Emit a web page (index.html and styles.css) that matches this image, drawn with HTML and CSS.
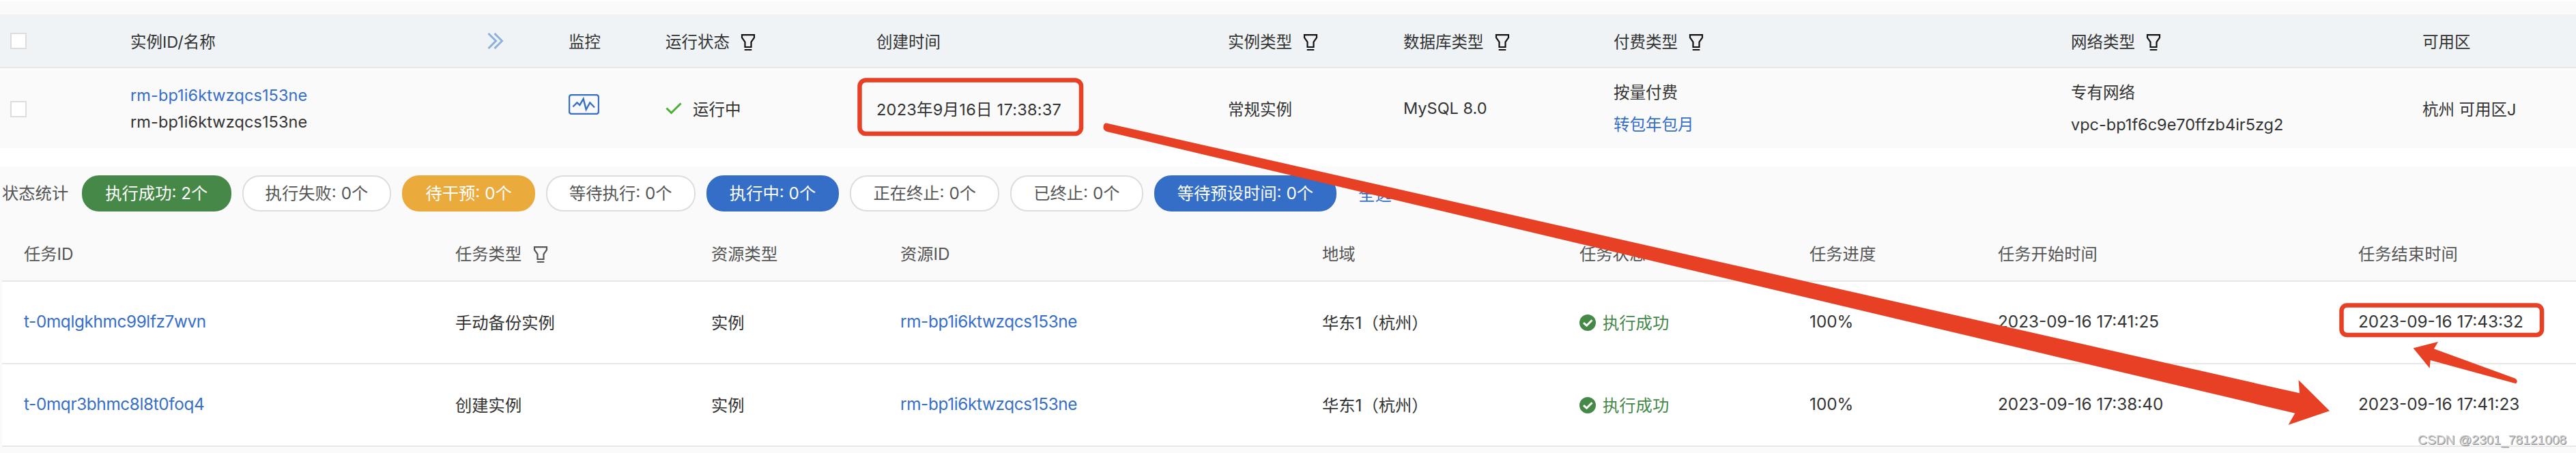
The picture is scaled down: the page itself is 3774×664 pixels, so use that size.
FILE: index.html
```html
<!DOCTYPE html>
<html lang="zh-CN">
<head>
    <meta charset="UTF-8">
    <title>实例列表</title>
    <link rel="stylesheet" href="styles.css">
</head>
<body>
    <!-- 公用图标 -->
    <svg class="symbols" width="0" height="0">
        <symbol id="filter" viewBox="0 0 22 26">
            <path d="M2 2.200h18v4l-4.500 6.300v7.500h-9v-7.500L2 6.200z" fill="none" stroke="currentColor" stroke-width="2.200"/>
            <path d="M5.700 24h10.600" stroke="currentColor" stroke-width="2"/>
        </symbol>
        <symbol id="success" viewBox="0 0 24 24">
            <circle cx="12" cy="12" r="12" fill="#468847"/>
            <path d="M6 12.200l4.500 4 8-8" fill="none" stroke="#fff" stroke-width="3"/>
        </symbol>
    </svg>

    <!-- 实例列表 -->
    <section class="instances">
        <div class="instance-grid instance-head">
            <div><span class="checkbox"></span></div>
            <div>实例ID/名称</div>
            <div><svg class="expand" viewBox="0 0 24 24"><path d="M1.500 1l11 11-11 11M10.500 1l11 11-11 11"/></svg></div>
            <div>监控</div>
            <div>运行状态<svg class="filter"><use href="#filter"/></svg></div>
            <div>创建时间</div>
            <div>实例类型<svg class="filter"><use href="#filter"/></svg></div>
            <div>数据库类型<svg class="filter"><use href="#filter"/></svg></div>
            <div>付费类型<svg class="filter"><use href="#filter"/></svg></div>
            <div>网络类型<svg class="filter"><use href="#filter"/></svg></div>
            <div>可用区</div>
        </div>
        <div class="instance-grid instance-row">
            <div><span class="checkbox"></span></div>
            <div class="names"><a class="link">rm-bp1i6ktwzqcs153ne</a><span>rm-bp1i6ktwzqcs153ne</span></div>
            <div></div>
            <div><svg class="monitor" viewBox="0 0 45 30"><rect x="1" y="1" width="43" height="28" rx="3.500"/><path d="M6.400 18.500l6-6 4 3.400 5.300-9 4 15.600 5.600-10 6.700 7"/></svg></div>
            <div><svg class="tick" viewBox="0 0 24 18"><path d="M1.500 8.500l7 7L22.500 1.500"/></svg>运行中</div>
            <div class="created">2023年9月16日 17:38:37</div>
            <div>常规实例</div>
            <div>MySQL 8.0</div>
            <div class="two-line"><span>按量付费</span><a class="link">转包年包月</a></div>
            <div class="two-line"><span>专有网络</span><span>vpc-bp1f6c9e70ffzb4ir5zg2</span></div>
            <div>杭州 可用区J</div>
        </div>
    </section>

    <!-- 任务列表 -->
    <section class="tasks">
        <div class="stats">
            <span class="stats-label">状态统计</span>
            <span class="pill green">执行成功: 2个</span>
            <span class="pill">执行失败: 0个</span>
            <span class="pill orange">待干预: 0个</span>
            <span class="pill">等待执行: 0个</span>
            <span class="pill blue">执行中: 0个</span>
            <span class="pill">正在终止: 0个</span>
            <span class="pill">已终止: 0个</span>
            <span class="pill blue">等待预设时间: 0个</span>
            <a class="link select-all">全选</a>
        </div>
        <div class="task-grid task-head">
            <div>任务ID</div>
            <div>任务类型<svg class="filter"><use href="#filter"/></svg></div>
            <div>资源类型</div>
            <div>资源ID</div>
            <div>地域</div>
            <div>任务状态</div>
            <div>任务进度</div>
            <div>任务开始时间</div>
            <div>任务结束时间</div>
        </div>
        <div class="task-grid task-row">
            <div><a class="link">t-0mqlgkhmc99lfz7wvn</a></div>
            <div>手动备份实例</div>
            <div>实例</div>
            <div><a class="link">rm-bp1i6ktwzqcs153ne</a></div>
            <div>华东1（杭州）</div>
            <div class="ok"><svg class="success"><use href="#success"/></svg>执行成功</div>
            <div>100%</div>
            <div>2023-09-16 17:41:25</div>
            <div>2023-09-16 17:43:32</div>
        </div>
        <div class="task-grid task-row">
            <div><a class="link">t-0mqr3bhmc8l8t0foq4</a></div>
            <div>创建实例</div>
            <div>实例</div>
            <div><a class="link">rm-bp1i6ktwzqcs153ne</a></div>
            <div>华东1（杭州）</div>
            <div class="ok"><svg class="success"><use href="#success"/></svg>执行成功</div>
            <div>100%</div>
            <div>2023-09-16 17:38:40</div>
            <div>2023-09-16 17:41:23</div>
        </div>
    </section>

    <!-- 标注：红框和箭头 -->
    <svg class="marks" viewBox="0 0 3774 664">
        <rect x="1259.500" y="117.500" width="324.500" height="78.500" rx="9"/>
        <rect x="3430.500" y="447.500" width="293.500" height="43.500" rx="8"/>
        <path d="M1621 180.500L3369 576.300 3367.500 557 3413 602.300 3352.600 622.700 3362.300 605.700 1622 193Q1616 191 1616.500 186 1617 180 1621 180.500z"/>
        <path d="M3535.600 510.300L3572 501 3565.900 511.300 3685 554.700Q3690 558 3686 562.300L3560.700 528 3559.600 539.700z"/>
    </svg>
    <div class="watermark">CSDN @2301_78121008</div>
</body>
</html>
```
FILE: styles.css
```css
* {
    box-sizing: border-box;
}

body {
    position: relative;
    width: 3774px;
    height: 664px;
    margin: 0;
    padding-top: 2px;
    overflow: hidden;
    background: #fff;
    color: #333;
    font-family: Inter, "Noto Sans CJK SC", sans-serif;
    font-size: 24px;
    white-space: nowrap;
}

.symbols {
    position: absolute;
}

.link {
    color: #366ec8;
}

/* 实例列表 */
.instances {
    height: 215px;
    padding-top: 19px;
    background: #fafafa;
    font-size: 23.5px;
}

.instance-grid {
    display: grid;
    grid-template-columns: 176px 523px 119px 142px 309px 515px 257px 308px 670px 515px 1fr;
    align-items: center;
    padding-left: 15px;
}

.instance-grid > div,
.task-grid > div {
    display: flex;
    align-items: center;
}

.instance-head {
    height: 79px;
    background: #eff3f6;
    border-bottom: 2px solid #e6e8ea;
}

.instance-row {
    height: 117px;
}

.checkbox {
    width: 24px;
    height: 24px;
    background: #fff;
    border: 2px solid #ddd;
}

.instance-row .checkbox {
    margin-top: 3px;
}

.expand {
    width: 24px;
    height: 24px;
    fill: none;
    stroke: #8db0dd;
    stroke-width: 3;
}

.filter {
    width: 22px;
    height: 26px;
    margin: 4px 0 0 16px;
    color: #111;
}

.instance-grid > .names,
.instance-grid > .two-line {
    flex-direction: column;
    align-items: flex-start;
}

.names {
    line-height: 39px;
    letter-spacing: 0.1px;
}

.created {
    letter-spacing: 0.25px;
}

.two-line {
    line-height: 47px;
}

.monitor {
    width: 45px;
    height: 30px;
    margin-bottom: 12px;
    fill: none;
    stroke: #366ec8;
    stroke-width: 2.4;
}

.tick {
    width: 24px;
    height: 18px;
    margin-right: 16px;
    fill: none;
    stroke: #4bae34;
    stroke-width: 3;
}

/* 任务列表 */
.tasks {
    height: 420px;
    margin-top: 27px;
    padding-top: 13px;
    background: #fafafa;
    font-size: 24.3px;
}

.stats {
    display: flex;
    align-items: center;
    gap: 16px;
    height: 53px;
    padding-left: 3px;
    color: #555;
}

.stats-label {
    margin: -5px 4px 0 0;
}

.pill {
    height: 53px;
    padding: 0 32.1px;
    border: 2px solid #ddd;
    border-radius: 25px;
    background: #fff;
    line-height: 49px;
}

.green {
    background: #468847;
    border-color: #468847;
    color: #fff;
}

.orange {
    background: #ebaa3c;
    border-color: #ebaa3c;
    color: #fff;
}

.blue {
    background: #346ec6;
    border-color: #346ec6;
    color: #fff;
}

.select-all {
    margin-left: 16px;
}

.task-grid {
    display: grid;
    grid-template-columns: 632px 375px 277px 618px 377px 337px 276px 528px 1fr;
    align-items: center;
    margin-left: 3px;
    padding-left: 32px;
    border-bottom: 2px solid #e8e8e8;
}

.task-head {
    height: 103px;
    padding-top: 20px;
    color: #555;
}

.task-head .filter {
    margin-left: 17px;
    color: #555;
}

.task-row {
    height: 121px;
    padding-bottom: 3px;
    background: #fff;
}

.task-row .link {
    letter-spacing: -0.35px;
}

.task-grid .ok {
    color: #468847;
}

.success {
    width: 24px;
    height: 24px;
    margin: 4px 10px 0 0;
}

/* 标注 */
.marks {
    position: absolute;
    left: 0;
    top: 0;
    width: 3774px;
    height: 664px;
}

.marks rect {
    fill: none;
    stroke: #e84025;
    stroke-width: 6.5;
}

.marks path {
    fill: #e84025;
}

.watermark {
    position: absolute;
    right: 14px;
    bottom: 7px;
    color: #ccc;
    font-family: "Liberation Sans", sans-serif;
    font-size: 19.2px;
    line-height: 24px;
    text-shadow: 1px 1px 0 #888;
}
```
